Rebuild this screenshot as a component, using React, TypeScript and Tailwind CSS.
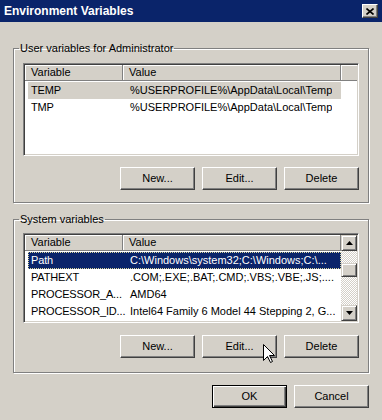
import React from "react";

type Row = { name: string; value: string };

const userVars: Row[] = [
  { name: "TEMP", value: "%USERPROFILE%\\AppData\\Local\\Temp" },
  { name: "TMP", value: "%USERPROFILE%\\AppData\\Local\\Temp" },
];

const systemVars: Row[] = [
  { name: "Path", value: "C:\\Windows\\system32;C:\\Windows;C:\\..." },
  { name: "PATHEXT", value: ".COM;.EXE;.BAT;.CMD;.VBS;.VBE;.JS;...." },
  { name: "PROCESSOR_A...", value: "AMD64" },
  { name: "PROCESSOR_ID...", value: "Intel64 Family 6 Model 44 Stepping 2, G..." },
];

const Button = ({ label, isDefault }: { label: string; isDefault?: boolean }) => (
  <button
    className={
      isDefault
        ? "w-[75px] h-[23px] bg-[#d4d0c8] border border-black shadow-[inset_1px_1px_0_#fff,inset_-1px_-1px_0_#404040,inset_-2px_-2px_0_#808080] text-[11px] text-black"
        : "w-[75px] h-[23px] bg-[#d4d0c8] border border-t-white border-l-white border-r-[#404040] border-b-[#404040] shadow-[inset_-1px_-1px_0_#808080] text-[11px] text-black"
    }
  >
    {label}
  </button>
);

const Header = () => (
  <div className="flex h-[16px]">
    <div className="w-[98px] bg-[#d4d0c8] border-r border-b border-[#808080] shadow-[inset_1px_1px_0_#fff] pl-[6px] leading-[15px]">
      Variable
    </div>
    <div className="w-[218px] bg-[#d4d0c8] border-r border-b border-[#808080] shadow-[inset_1px_1px_0_#fff] pl-[6px] leading-[15px]">
      Value
    </div>
  </div>
);

const ListRow = ({ row, mode }: { row: Row; mode: "none" | "inactive" | "active" }) => (
  <div className="flex h-[17px] pl-[3px]">
    <div
      className={
        mode === "active"
          ? "flex w-[313px] items-center bg-[#0a246a] text-white border border-dotted border-[#d8d49c]"
          : mode === "inactive"
          ? "flex w-[313px] items-center bg-[#d4d0c8] border border-transparent"
          : "flex w-[313px] items-center border border-transparent"
      }
    >
      <div className="w-[94px] shrink-0 pl-[2px] whitespace-nowrap tracking-[-0.15px]">{row.name}</div>
      <div className="pl-[7px] whitespace-nowrap overflow-hidden">{row.value}</div>
    </div>
  </div>
);

const ScrollButton = ({ up }: { up?: boolean }) => (
  <div className="w-[16px] h-[16px] bg-[#d4d0c8] border border-t-[#d4d0c8] border-l-[#d4d0c8] border-r-[#404040] border-b-[#404040] shadow-[inset_1px_1px_0_#fff,inset_-1px_-1px_0_#808080] flex items-center justify-center">
    <svg width="7" height="4" viewBox="0 0 7 4">
      {up ? <path d="M3.5 0 L7 4 L0 4 Z" fill="#000" /> : <path d="M0 0 L7 0 L3.5 4 Z" fill="#000" />}
    </svg>
  </div>
);

const Sunken = ({ height, children }: { height: string; children: React.ReactNode }) => (
  <div
    className={`${height} w-[336px] bg-white border border-t-[#808080] border-l-[#808080] border-r-white border-b-white p-[1px] shadow-[inset_1px_1px_0_#404040,inset_-1px_-1px_0_#d4d0c8]`}
  >
    {children}
  </div>
);

export default function App() {
  return (
    <div className="relative w-[382px] h-[420px] bg-[#d4d0c8] font-['Liberation_Sans',Arial,sans-serif] text-[11px] text-black overflow-hidden">
      {/* Title bar */}
      <div className="flex h-[22px] items-center justify-between bg-[#0a246a] pl-[4px] pr-[4px]">
        <span className="text-[12px] font-bold text-white">Environment Variables</span>
        <div className="w-[16px] h-[14px] bg-[#d4d0c8] border border-t-white border-l-white border-r-[#404040] border-b-[#404040] shadow-[inset_-1px_-1px_0_#808080] flex items-center justify-center">
          <svg width="8" height="7" viewBox="0 0 8 7">
            <path d="M0.5 0.5 L7.5 6.5 M7.5 0.5 L0.5 6.5" stroke="#000" strokeWidth="1.6" />
          </svg>
        </div>
      </div>

      {/* User variables */}
      <fieldset className="mx-[13px] mt-[19px] h-[162px] border border-[#808080] shadow-[1px_1px_0_#fff,inset_1px_1px_0_#fff]">
        <legend className="ml-[5px] px-[1px] leading-[14px]">User variables for Administrator</legend>
        <div className="flex flex-col items-start pl-[9px] pt-[8px]">
          <Sunken height="h-[93px]">
            <div className="flex">
              <Header />
              <div className="w-[16px] h-[16px] bg-[#d4d0c8] border-b border-[#808080] shadow-[inset_1px_1px_0_#fff]" />
            </div>
            <div className="pt-[1px]">
              <ListRow row={userVars[0]} mode="inactive" />
              <ListRow row={userVars[1]} mode="none" />
            </div>
          </Sunken>
          <div className="mt-[11px] flex w-[336px] justify-end gap-[7px]">
            <Button label="New..." />
            <Button label="Edit..." />
            <Button label="Delete" />
          </div>
        </div>
      </fieldset>

      {/* System variables */}
      <fieldset className="mx-[13px] mt-[9px] h-[161px] border border-[#808080] shadow-[1px_1px_0_#fff,inset_1px_1px_0_#fff]">
        <legend className="ml-[5px] px-[1px] leading-[14px]">System variables</legend>
        <div className="flex flex-col items-start pl-[9px] pt-[7px]">
          <Sunken height="h-[90px]">
            <div className="flex">
              <div className="w-[316px]">
                <Header />
                <div className="pt-[1px]">
                  <ListRow row={systemVars[0]} mode="active" />
                  {systemVars.slice(1).map((r) => (
                    <ListRow key={r.name} row={r} mode="none" />
                  ))}
                </div>
              </div>
              <div className="flex h-[86px] w-[16px] flex-col">
                <ScrollButton up />
                <div className="flex-1 bg-[repeating-conic-gradient(#d4d0c8_0_25%,#ffffff_0_50%)] bg-[length:2px_2px] pt-[12px]">
                  <div className="h-[14px] w-[16px] bg-[#d4d0c8] border border-t-[#d4d0c8] border-l-[#d4d0c8] border-r-[#404040] border-b-[#404040] shadow-[inset_1px_1px_0_#fff,inset_-1px_-1px_0_#808080]" />
                </div>
                <ScrollButton />
              </div>
            </div>
          </Sunken>
          <div className="mt-[12px] flex w-[336px] justify-end gap-[7px]">
            <Button label="New..." />
            <Button label="Edit..." />
            <Button label="Delete" />
          </div>
        </div>
      </fieldset>

      {/* Dialog buttons */}
      <div className="mt-[12px] flex justify-end gap-[7px] pr-[13px]">
        <Button label="OK" isDefault />
        <Button label="Cancel" />
      </div>

      {/* Mouse pointer */}
      <svg className="absolute left-[263px] top-[344px]" width="13" height="20" viewBox="0 0 13 20">
        <path
          d="M0.5 0.5 L0.5 16.5 L4.5 12.5 L7.5 18.5 L9.5 17.5 L6.5 11.5 L11.5 11.5 Z"
          fill="#fff"
          stroke="#000"
          strokeWidth="1"
        />
      </svg>
    </div>
  );
}
